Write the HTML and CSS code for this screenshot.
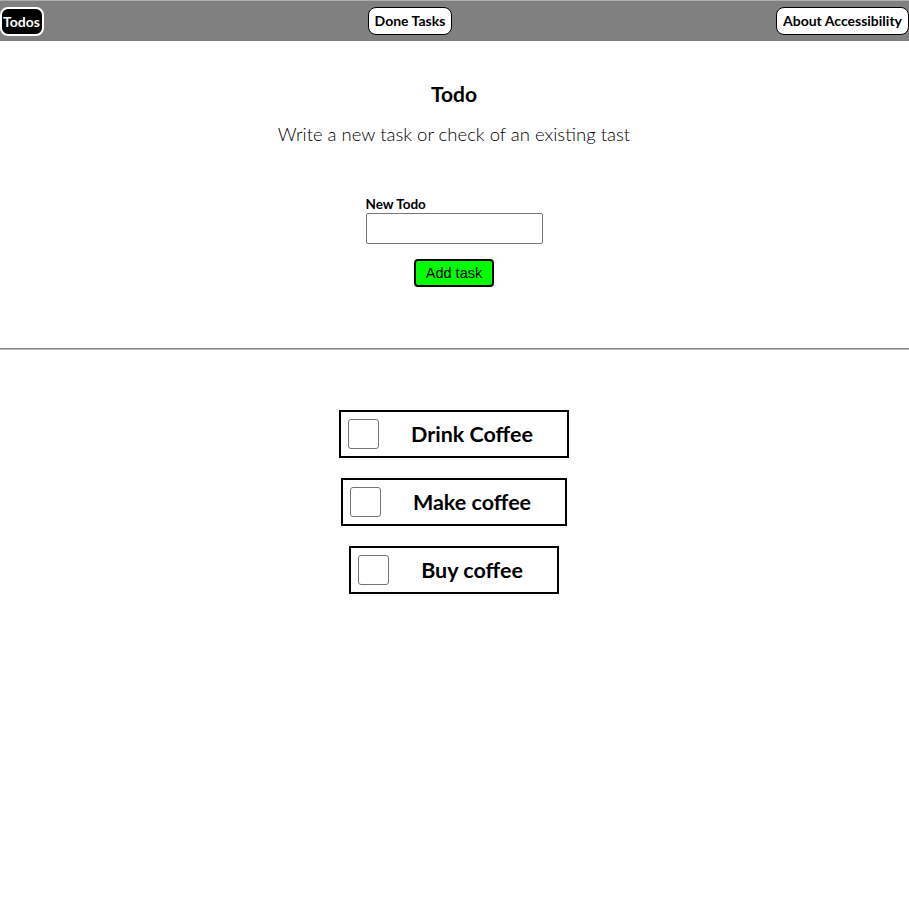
FILE: index.html
```html
<!DOCTYPE html>
<html lang="en">
<head>
<meta charset="utf-8">
<title>Todos</title>
<link rel="stylesheet" href="styles.css">
</head>
<body>
<nav class="nav">
  <a class="nav-btn nav-btn-active" href="#">Todos</a>
  <a class="nav-btn" href="#">Done Tasks</a>
  <a class="nav-btn" href="#">About Accessibility</a>
</nav>
<main class="main">
  <section class="intro">
    <h1 class="title">Todo</h1>
    <p class="subtitle">Write a new task or check of an existing tast</p>
    <form class="form">
      <label class="label" for="newtodo">New Todo</label>
      <input class="input" id="newtodo" type="text">
      <button class="add-btn" type="button">Add task</button>
    </form>
  </section>
  <hr class="divider">
  <ul class="list">
    <li class="item"><input class="check" type="checkbox"><span class="item-text">Drink Coffee</span></li>
    <li class="item"><input class="check" type="checkbox"><span class="item-text">Make coffee</span></li>
    <li class="item"><input class="check" type="checkbox"><span class="item-text">Buy coffee</span></li>
  </ul>
</main>
</body>
</html>
```
FILE: styles.css
```css
html, body {
  margin: 0;
  padding: 0;
  background: #fff;
  font-family: Lato, "Open Sans", sans-serif;
  color: #000;
}
.nav {
  display: flex;
  justify-content: space-between;
  align-items: center;
  background: #808080;
  border-top: 1px solid #b0b0b0;
  height: 40px;
  box-sizing: content-box;
}
.nav-btn {
  display: inline-block;
  text-decoration: none;
  font-weight: 700;
  font-size: 14px;
  color: #000;
  background: #fff;
  border: 1px solid #000;
  border-radius: 8px;
  padding: 4px 6px 4px 6px;
  line-height: 18px;
}
.nav-btn-active {
  background: #000;
  color: #fff;
  border: 2px solid #fff;
  padding: 4px 2px 3px 1px;
}
.main {
  display: flex;
  flex-direction: column;
}
.intro {
  display: flex;
  flex-direction: column;
  align-items: center;
  padding-right: 1px;
}
.title {
  font-size: 21px;
  font-weight: 700;
  margin: 40px 0 0;
  line-height: 26px;
}
.subtitle {
  font-size: 18.5px;
  font-weight: 300;
  margin: 16px 0 0;
  line-height: 22px;
}
.form {
  display: flex;
  flex-direction: column;
  align-items: center;
  margin-top: 51px;
  width: 177px;
}
.label {
  align-self: flex-start;
  font-size: 13.5px;
  font-weight: 700;
  line-height: 16px;
}
.input {
  width: 177px;
  height: 31px;
  box-sizing: border-box;
  border: 1px solid #767676;
  border-radius: 2px;
  margin: 1px 0 0;
}
.add-btn {
  margin-top: 15px;
  width: 80px;
  height: 28px;
  box-sizing: border-box;
  background: #00ff00;
  border: 2px solid #000;
  border-radius: 4px;
  font-family: "Liberation Sans", Arial, sans-serif;
  font-size: 14.5px;
  color: #000;
  padding: 0;
}
.divider {
  margin: 61px 0 0;
  border: 0;
  border-top: 1px solid #888;
  border-bottom: 1px solid #bbb;
  height: 0;
}
.list {
  list-style: none;
  margin: 60px 0 0;
  padding: 0 1px 0 0;
  display: flex;
  flex-direction: column;
  align-items: center;
  gap: 20px;
}
.item {
  display: flex;
  align-items: center;
  border: 2px solid #000;
  height: 48px;
  box-sizing: border-box;
  padding: 0 7px;
}
.check {
  -webkit-appearance: none;
  appearance: none;
  width: 31px;
  height: 30px;
  margin: 0;
  border: 1px solid #767676;
  border-radius: 3px;
  background: #fff;
}
.item-text {
  font-size: 21.5px;
  font-weight: 700;
  margin: 0 27px 0 32px;
}
```
